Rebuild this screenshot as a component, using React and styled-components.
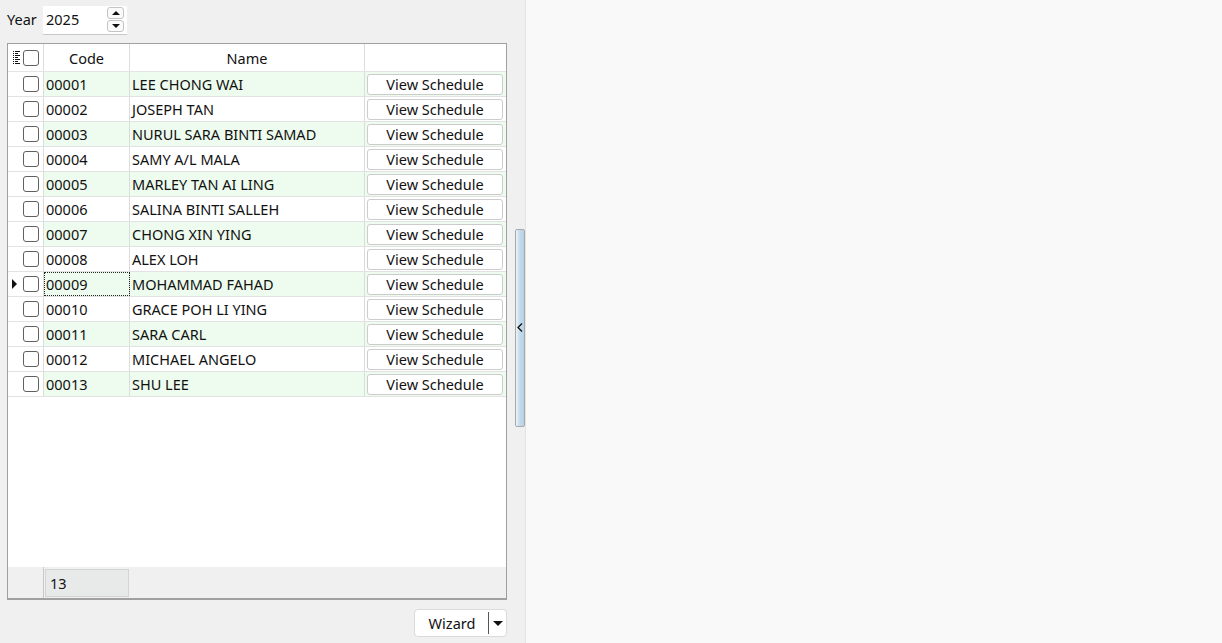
import React from "react";
import styled, { createGlobalStyle } from "styled-components";

const Global = createGlobalStyle`
  html, body { margin: 0; padding: 0; height: 100%; }
  body { font-family: "Noto Sans", "Open Sans", sans-serif; font-size: 14.5px; color: #111; }
  #root { height: 100%; }
`;

const Page = styled.div`
  display: flex;
  height: 643px;
  width: 1222px;
  overflow: hidden;
`;

const LeftPanel = styled.div`
  display: flex;
  flex-direction: row;
  width: 526px;
  background: #f0f0f0;
  border-right: 1px solid #e4e4e4;
  box-sizing: border-box;
`;

const Content = styled.div`
  display: flex;
  flex-direction: column;
  width: 500px;
  margin-left: 7px;
  padding-top: 5px;
`;

const RightPanel = styled.div`
  flex: 1;
  background: #f9f9f9;
`;

const YearRow = styled.div`
  display: flex;
  align-items: center;
  height: 30px;
`;

const Label = styled.span`
  width: 36px;
  margin-top: -2px;
`;

const SpinInput = styled.div`
  display: flex;
  align-items: center;
  justify-content: space-between;
  width: 84px;
  height: 29px;
  box-sizing: border-box;
  background: #fff;
  border-bottom: 1px solid #c8c8c8;
  padding: 0 3px 0 3px;
`;

const SpinText = styled.span`
  margin-top: -2px;
`;

const SpinButtons = styled.div`
  display: flex;
  flex-direction: column;
  gap: 1px;
`;

const SpinButton = styled.div`
  width: 15px;
  height: 10px;
  border: 1px solid #c4c4c4;
  border-radius: 3px;
  background: #fafafa;
  display: flex;
  align-items: center;
  justify-content: center;
`;

const Triangle = styled.div`
  width: 0;
  height: 0;
  border-left: 4px solid transparent;
  border-right: 4px solid transparent;
  ${(p) => (p.$up ? "border-bottom: 4px solid #111;" : "border-top: 4px solid #111;")}
`;

const Grid = styled.div`
  margin-top: 8px;
  width: 500px;
  height: 557px;
  box-sizing: border-box;
  border: 1px solid #a0a0a0;
  border-bottom: 2px solid #a0a0a0;
  background: #fff;
  display: flex;
  flex-direction: column;
`;

const COLS = "36px 86px 235px 141px";

const HeaderRow = styled.div`
  display: grid;
  grid-template-columns: ${COLS};
  height: 28px;
  border-bottom: 1px solid #e4e4e4;
  box-sizing: border-box;
`;

const HeaderCell = styled.div`
  display: flex;
  align-items: center;
  justify-content: center;
  padding-top: 1px;
  border-right: 1px solid #dcdcdc;
  &:last-child { border-right: none; }
`;

const IndicatorCell = styled.div`
  display: flex;
  align-items: center;
  justify-content: flex-end;
  gap: 2px;
  padding-right: 4px;
  border-right: 1px solid #dcdcdc;
  position: relative;
`;

const Body = styled.div`
  flex: 1;
  display: flex;
  flex-direction: column;
`;

const Row = styled.div`
  display: grid;
  grid-template-columns: ${COLS};
  height: 25px;
  border-bottom: 1px solid #e2e2e2;
  box-sizing: border-box;
`;

const Cell = styled.div`
  display: flex;
  align-items: center;
  padding-left: 2px;
  background: ${(p) => (p.$alt ? "#edfcee" : "#fff")};
  border-right: 1px solid #dcdcdc;
  white-space: nowrap;
  box-sizing: border-box;
  ${(p) => p.$focus && "outline: 1px dotted #222; outline-offset: -1px;"}
  &:last-child { border-right: none; }
`;

const ButtonCell = styled(Cell)`
  padding: 0 0 0 2px;
  justify-content: flex-start;
`;

const ViewButton = styled.button`
  width: 136px;
  height: 21px;
  background: #fff;
  border: 1px solid #cccccc;
  border-radius: 3px;
  font-family: inherit;
  font-size: 14.5px;
  color: #111;
  padding: 0;
  line-height: 19px;
`;

const Check = styled.div`
  width: 16px;
  height: 16px;
  box-sizing: border-box;
  border: 1px solid #606060;
  border-radius: 3px;
  background: #fff;
`;

const RowIndicator = styled.div`
  position: absolute;
  left: 4px;
  top: 50%;
  transform: translateY(-50%);
  width: 0;
  height: 0;
  border-top: 5px solid transparent;
  border-bottom: 5px solid transparent;
  border-left: 5px solid #111;
`;

const Footer = styled.div`
  display: grid;
  grid-template-columns: 36px 86px 1fr;
  height: 31px;
  background: #f0f0f0;
`;

const FooterIndicator = styled.div`
  border-right: 1px solid #c8c8c8;
`;

const FooterCell = styled.div`
  margin: 2px 1px 1px 1px;
  background: #e8eaea;
  border: 1px solid #d4d4d4;
  display: flex;
  align-items: center;
  padding-left: 4px;
`;

const BottomBar = styled.div`
  display: flex;
  justify-content: flex-end;
  padding-top: 9px;
`;

const WizardButton = styled.div`
  width: 93px;
  height: 28px;
  box-sizing: border-box;
  background: #fff;
  border: 1px solid #dadada;
  border-radius: 4px;
  display: flex;
  align-items: center;
`;

const WizardText = styled.span`
  flex: 1;
  text-align: center;
  padding-left: 1px;
`;

const WizardDivider = styled.div`
  width: 1px;
  height: 22px;
  background: #555;
`;

const WizardArrow = styled.div`
  width: 17px;
  display: flex;
  justify-content: center;
`;

const DownTri = styled.div`
  width: 0;
  height: 0;
  border-left: 5px solid transparent;
  border-right: 5px solid transparent;
  border-top: 5px solid #111;
`;

const SplitterCol = styled.div`
  flex: 1;
  display: flex;
  align-items: center;
  justify-content: flex-start;
  padding-left: 8px;
  padding-top: 12px;
`;

const SplitterBar = styled.div`
  width: 10px;
  height: 198px;
  box-sizing: border-box;
  border: 1px solid #a8a8a8;
  border-radius: 2px;
  background: linear-gradient(to right, #f0f4f8 0%, #c4dcec 45%, #b4d2e6 100%);
  display: flex;
  align-items: center;
  justify-content: center;
`;

const people = [
  ["00001", "LEE CHONG WAI"],
  ["00002", "JOSEPH TAN"],
  ["00003", "NURUL SARA BINTI SAMAD"],
  ["00004", "SAMY A/L MALA"],
  ["00005", "MARLEY TAN AI LING"],
  ["00006", "SALINA BINTI SALLEH"],
  ["00007", "CHONG XIN YING"],
  ["00008", "ALEX LOH"],
  ["00009", "MOHAMMAD FAHAD"],
  ["00010", "GRACE POH LI YING"],
  ["00011", "SARA CARL"],
  ["00012", "MICHAEL ANGELO"],
  ["00013", "SHU LEE"],
];

const ListIcon = () => (
  <svg width="7" height="13" viewBox="0 0 7 13" style={{ marginRight: 1 }}>
    {[0, 2, 4, 6, 8, 10, 12].map((y, i) => (
      <g key={i}>
        <rect x="0" y={y} width="1" height="1" fill="#111" />
        <rect x="2" y={y} width={i % 2 === 0 ? 5 : 3} height="1" fill="#111" />
      </g>
    ))}
  </svg>
);

export default function App() {
  return (
    <>
      <Global />
      <Page>
        <LeftPanel>
          <Content>
            <YearRow>
              <Label>Year</Label>
              <SpinInput>
                <SpinText>2025</SpinText>
                <SpinButtons>
                  <SpinButton><Triangle $up /></SpinButton>
                  <SpinButton><Triangle /></SpinButton>
                </SpinButtons>
              </SpinInput>
            </YearRow>
            <Grid>
              <HeaderRow>
                <IndicatorCell>
                  <ListIcon />
                  <Check />
                </IndicatorCell>
                <HeaderCell>Code</HeaderCell>
                <HeaderCell>Name</HeaderCell>
                <HeaderCell />
              </HeaderRow>
              <Body>
                {people.map(([code, name], i) => {
                  const alt = i % 2 === 0;
                  const current = code === "00009";
                  return (
                    <Row key={code}>
                      <IndicatorCell>
                        {current && <RowIndicator />}
                        <Check />
                      </IndicatorCell>
                      <Cell $alt={alt} $focus={current}>{code}</Cell>
                      <Cell $alt={alt}>{name}</Cell>
                      <ButtonCell $alt={alt}>
                        <ViewButton>View Schedule</ViewButton>
                      </ButtonCell>
                    </Row>
                  );
                })}
              </Body>
              <Footer>
                <FooterIndicator />
                <FooterCell>13</FooterCell>
                <div />
              </Footer>
            </Grid>
            <BottomBar>
              <WizardButton>
                <WizardText>Wizard</WizardText>
                <WizardDivider />
                <WizardArrow><DownTri /></WizardArrow>
              </WizardButton>
            </BottomBar>
          </Content>
          <SplitterCol>
            <SplitterBar>
              <svg width="6" height="9" viewBox="0 0 6 9">
                <path d="M5 0.5 L1 4.5 L5 8.5" stroke="#111" strokeWidth="1.3" fill="none" />
              </svg>
            </SplitterBar>
          </SplitterCol>
        </LeftPanel>
        <RightPanel />
      </Page>
    </>
  );
}
